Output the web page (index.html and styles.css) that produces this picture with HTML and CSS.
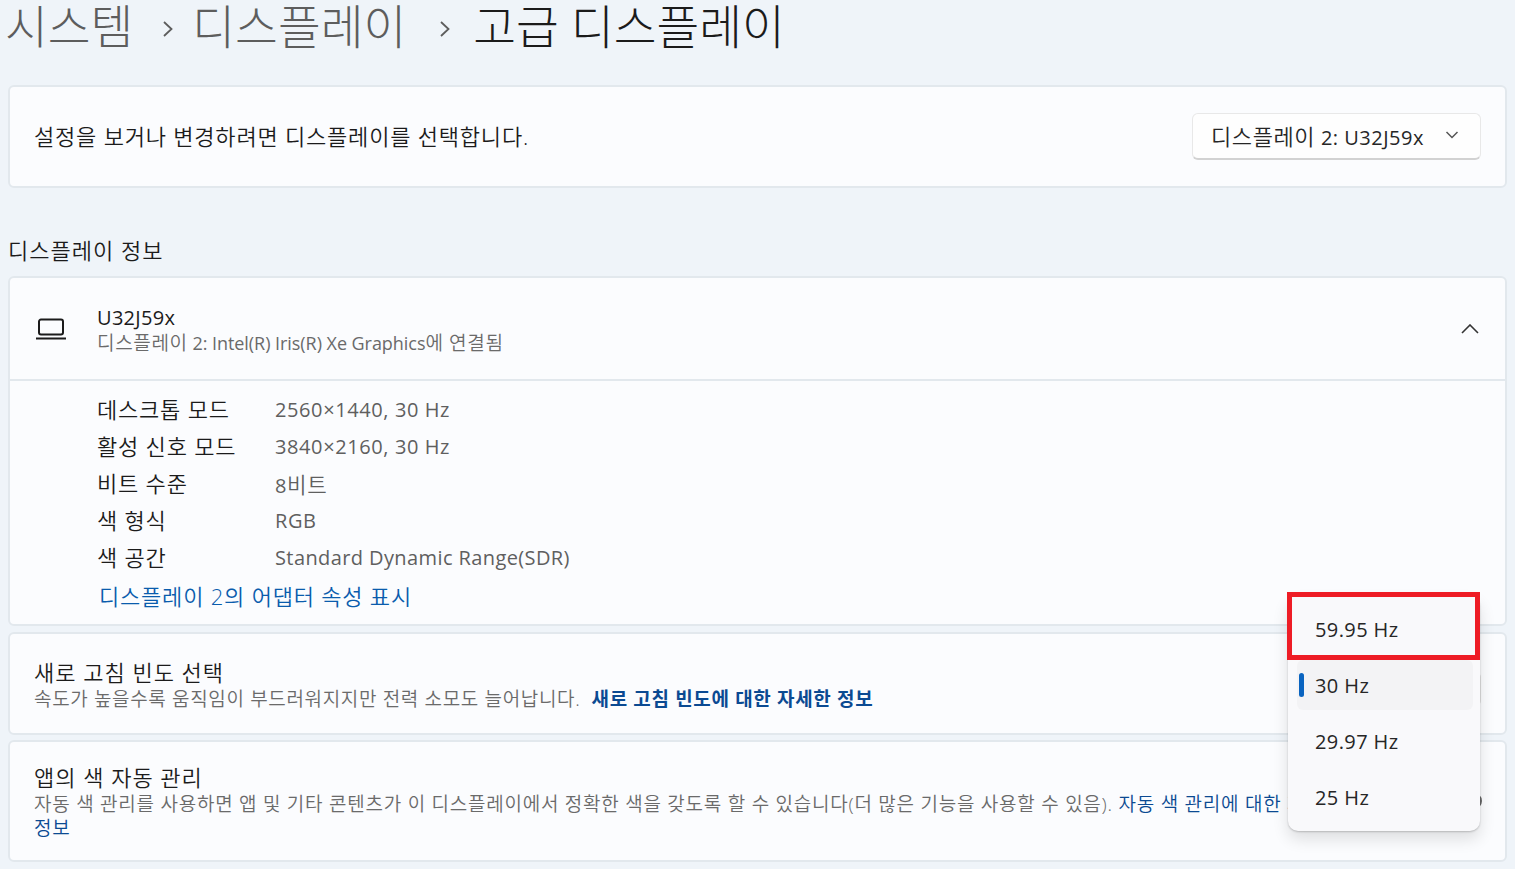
FILE: index.html
```html
<!DOCTYPE html>
<html lang="ko">
<head>
    <meta charset="UTF-8">
    <meta name="viewport" content="width=device-width, initial-scale=1.0">
    <title>고급 디스플레이</title>
    <link rel="stylesheet" href="styles.css">
</head>
<body>
    <div class="breadcrumb">
        <span class="crumb">시스템</span>
        <svg class="crumb-sep" viewBox="0 0 10 16"><path d="M1 1l7.500 7-7.500 7"/></svg>
        <span class="crumb">디스플레이</span>
        <svg class="crumb-sep second" viewBox="0 0 10 16"><path d="M1 1l7.500 7-7.500 7"/></svg>
        <span class="crumb current">고급 디스플레이</span>
    </div>

    <div class="card select-card">
        <p class="select-text">설정을 보거나 변경하려면 디스플레이를 선택합니다.</p>
        <div class="combo">
            <span><span class="ko">디스플레이</span> 2: U32J59x</span>
            <svg class="combo-arrow" viewBox="0 0 14 8"><path d="M1.500 1l5.500 5.500L12.500 1"/></svg>
        </div>
    </div>

    <h2 class="section-title">디스플레이 정보</h2>

    <div class="card info-card">
        <div class="info-head">
            <svg class="laptop" viewBox="0 0 30 22"><path d="M5 1.500h20a2 2 0 0 1 2 2v11a2 2 0 0 1-2 2h-20a2 2 0 0 1-2-2v-11a2 2 0 0 1 2-2z"/><path d="M0 20.500h30"/></svg>
            <div class="info-names">
                <div class="info-name">U32J59x</div>
                <div class="info-sub"><span class="ko">디스플레이</span> 2: Intel(R) Iris(R) Xe Graphics<span class="ko">에 연결됨</span></div>
            </div>
            <svg class="collapse" viewBox="0 0 18 10"><path d="M1 9l8-8 8 8"/></svg>
        </div>
        <div class="info-body">
            <div class="info-row"><span class="info-key">데스크톱 모드</span><span class="info-val">2560×1440, 30 Hz</span></div>
            <div class="info-row"><span class="info-key">활성 신호 모드</span><span class="info-val">3840×2160, 30 Hz</span></div>
            <div class="info-row"><span class="info-key">비트 수준</span><span class="info-val">8<span class="ko">비트</span></span></div>
            <div class="info-row"><span class="info-key">색 형식</span><span class="info-val">RGB</span></div>
            <div class="info-row"><span class="info-key">색 공간</span><span class="info-val tight">Standard Dynamic Range(SDR)</span></div>
            <a class="adapter-link">디스플레이 2의 어댑터 속성 표시</a>
        </div>
    </div>

    <div class="card rate-card">
        <div class="row-title">새로 고침 빈도 선택</div>
        <div class="row-desc">속도가 높을수록 움직임이 부드러워지지만 전력 소모도 늘어납니다.&nbsp; <a class="bold-link">새로 고침 빈도에 대한 자세한 정보</a></div>
        <div class="rate-combo"></div>
    </div>

    <div class="card color-card">
        <div class="row-title">앱의 색 자동 관리</div>
        <div class="row-desc">자동 색 관리를 사용하면 앱 및 기타 콘텐츠가 이 디스플레이에서 정확한 색을 갖도록 할 수 있습니다(더 많은 기능을 사용할 수 있음). <a class="plain-link">자동 색 관리에 대한 자세한<br>정보</a></div>
        <div class="color-toggle"></div>
    </div>

    <div class="rate-menu">
        <div class="rate-item">59.95 Hz</div>
        <div class="rate-item selected">30 Hz</div>
        <div class="rate-item">29.97 Hz</div>
        <div class="rate-item">25 Hz</div>
        <div class="red-box"></div>
    </div>
</body>
</html>
```

FILE: styles.css
```css
html, body {
    height: 100%;
}
body {
    background-color: #eff4f9;
    font-family: "Open Sans", "Noto Sans CJK KR", sans-serif;
    font-weight: 400;
    color: #1b1b1b;
    margin: 0;
    padding: 0 8px;
    overflow: hidden;
}
.ko {
    font-size: 1.06em;
    font-weight: 350;
    letter-spacing: 0.600px;
}
.breadcrumb {
    display: flex;
    align-items: center;
    height: 85px;
    padding-bottom: 33px;
    box-sizing: border-box;
    margin-left: -3px;
}
.crumb {
    font-size: 46.500px;
    font-weight: 300;
    color: #5d5d5d;
    line-height: 52px;
    white-space: nowrap;
}
.crumb.current {
    color: #1b1b1b;
}
.crumb-sep {
    width: 10px;
    height: 16px;
    margin: 5px 19px 0 30px;
    fill: none;
    stroke: #5d5d5d;
    stroke-width: 1.800;
}
.crumb-sep.second {
    margin: 5px 23px 0 34px;
}
.card {
    background-color: #fbfcfe;
    border: 2px solid #e2e8ed;
    border-radius: 6px;
    box-sizing: border-box;
    position: relative;
}
.select-card {
    height: 103px;
    display: flex;
    align-items: center;
    justify-content: space-between;
    padding: 0 24px 0 24px;
}
.select-text {
    font-size: 22px;
    font-weight: 350;
    letter-spacing: 0.800px;
    margin: 0 0 3px;
}
.combo {
    width: 289px;
    height: 47px;
    box-sizing: border-box;
    display: flex;
    align-items: center;
    justify-content: space-between;
    padding: 0 21px 2px 18px;
    background-color: #fefefe;
    border: 1px solid #e8e8e8;
    border-bottom: 2px solid #d2d2d2;
    border-radius: 6px;
    font-size: 20px;
    letter-spacing: 0.500px;
    color: #262626;
}
.combo .ko {
    font-size: 22px;
    letter-spacing: 0.600px;
}
.combo-arrow {
    width: 14px;
    height: 8px;
    fill: none;
    stroke: #555;
    stroke-width: 1.500;
}
.section-title {
    font-size: 22px;
    font-weight: 350;
    letter-spacing: 1px;
    margin: 0;
    height: 88px;
    box-sizing: border-box;
    padding-top: 47px;
    line-height: 30px;
}
.info-card {
    height: 350px;
}
.info-head {
    display: flex;
    align-items: center;
    height: 101px;
    padding: 0 26px 0 26px;
    border-bottom: 2px solid #e2e8ed;
}
.laptop {
    width: 30px;
    height: 22px;
    fill: none;
    stroke: #1b1b1b;
    stroke-width: 2;
}
.info-names {
    flex: 1;
    margin: 2px 0 0 31px;
}
.info-name {
    font-size: 20px;
    letter-spacing: 0.300px;
    line-height: 27px;
}
.info-sub {
    font-size: 18px;
    letter-spacing: -0.050px;
    line-height: 24px;
    color: #6a6a6a;
}
.collapse {
    width: 18px;
    height: 10px;
    fill: none;
    stroke: #333;
    stroke-width: 1.600;
}
.info-body {
    padding: 10px 0 0 87px;
}
.info-row {
    display: flex;
    height: 37px;
    align-items: center;
    font-size: 20px;
}
.info-key {
    width: 178px;
    font-size: 22px;
    font-weight: 350;
    letter-spacing: 0.800px;
    margin-bottom: 3px;
}
.info-val {
    color: #5f5f5f;
    letter-spacing: 0.600px;
}
.info-val.tight {
    letter-spacing: 0.400px;
}
.adapter-link {
    display: block;
    margin: 2px 0 0 2px;
    font-size: 22px;
    font-weight: 350;
    letter-spacing: 0.800px;
    line-height: 37px;
    color: #0a5cad;
}
.rate-card {
    margin-top: 6px;
    height: 103px;
    padding: 24px 24px 0;
}
.color-card {
    margin-top: 5px;
    height: 122px;
    padding: 21px 24px 0;
}
.row-title {
    font-size: 22px;
    font-weight: 350;
    letter-spacing: 1px;
    line-height: 29px;
}
.row-desc {
    font-size: 19px;
    font-weight: 350;
    letter-spacing: 0.650px;
    line-height: 24px;
    color: #6a6a6a;
    white-space: nowrap;
}
.color-card .row-desc {
    letter-spacing: 0.750px;
}
.bold-link {
    color: #0b4a92;
    font-weight: 700;
}
.plain-link {
    color: #0b4a92;
}
/* controls of the two rows, mostly hidden by the open menu */
.rate-combo {
    position: absolute;
    right: 24px;
    top: 38px;
    width: 150px;
    height: 32px;
    border: 1px solid #e2e2e2;
    border-radius: 5px;
}
.color-toggle {
    position: absolute;
    right: 23px;
    top: 50px;
    width: 44px;
    height: 18px;
    border: 2px solid #666;
    border-radius: 12px;
    box-sizing: border-box;
}
/* dropdown opened over the page, with the screenshot's red marker on it */
.rate-menu {
    position: absolute;
    left: 1288px;
    top: 595px;
    width: 192px;
    height: 236px;
    padding-top: 6px;
    box-sizing: border-box;
    background-color: #f9f9fb;
    border-radius: 10px;
    box-shadow: 0 1px 2px rgba(0, 0, 0, 0.2), 0 8px 16px rgba(0, 0, 0, 0.12);
}
.rate-item {
    height: 56px;
    display: flex;
    align-items: center;
    padding-left: 27px;
    font-size: 20px;
    letter-spacing: 0.400px;
    color: #262626;
    position: relative;
}
.rate-item.selected {
    background-color: #f3f3f5;
    margin: 3px 7px 3px 9px;
    padding-left: 18px;
    height: 50px;
    border-radius: 6px;
}
.rate-item.selected::before {
    content: "";
    position: absolute;
    left: 2px;
    top: 13px;
    width: 5px;
    height: 24px;
    background-color: #0a64c0;
    border-radius: 3px;
}
.red-box {
    position: absolute;
    left: -1px;
    top: -3px;
    width: 193px;
    height: 68px;
    border: 5px solid #ee1c25;
    box-sizing: border-box;
}
```
